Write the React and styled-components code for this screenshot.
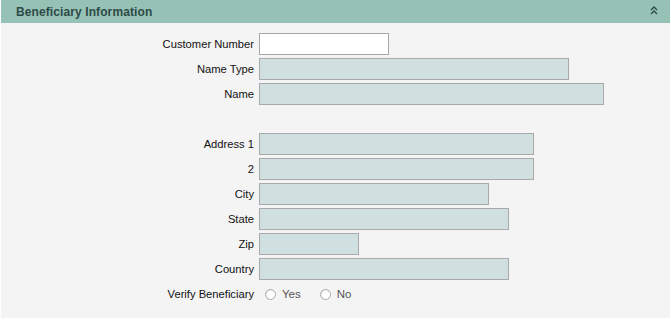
import React from "react";
import styled, { createGlobalStyle } from "styled-components";

const GlobalStyle = createGlobalStyle`
  body {
    margin: 0;
    background: #ffffff;
    font-family: "Liberation Sans", Arial, sans-serif;
  }
`;

const rows = [
  { label: "Customer Number", width: 130, editable: true },
  { label: "Name Type", width: 310 },
  { label: "Name", width: 345 },
  { spacer: true },
  { label: "Address 1", width: 275 },
  { label: "2", width: 275 },
  { label: "City", width: 230 },
  { label: "State", width: 250 },
  { label: "Zip", width: 100 },
  { label: "Country", width: 250 },
];

function CollapseIcon() {
  return (
    <svg width="8" height="9" viewBox="0 0 8 9">
      <path d="M1 4 L4 1 L7 4 M1 8 L4 5 L7 8" fill="none" stroke="#2c4c44" strokeWidth="1.4" />
    </svg>
  );
}

function App() {
  return (
    <>
      <GlobalStyle />
      <Panel>
        <Header>
          <Title>Beneficiary Information</Title>
          <CollapseIcon />
        </Header>
        <Form>
          {rows.map((r, i) =>
            r.spacer ? (
              <Spacer key={i} />
            ) : (
              <Row key={i}>
                <Label>{r.label}</Label>
                <Field $w={r.width} $editable={r.editable} />
              </Row>
            )
          )}
          <Row>
            <Label>Verify Beneficiary</Label>
            <Radios>
              <RadioOption>
                <RadioDot />
                Yes
              </RadioOption>
              <RadioOption>
                <RadioDot />
                No
              </RadioOption>
            </Radios>
          </Row>
        </Form>
      </Panel>
    </>
  );
}

export default App;

const Panel = styled.div`
  margin-left: 1px;
  width: 669px;
  height: 318px;
  background: #f4f4f4;
`;

const Header = styled.div`
  height: 23px;
  background: #96c2b6;
  display: flex;
  align-items: center;
  justify-content: space-between;
  padding: 0 12px 0 15px;
  svg {
    margin-top: -2px;
  }
`;

const Title = styled.div`
  font-weight: 700;
  font-size: 12px;
  letter-spacing: 0.1px;
  color: #2e4a47;
`;

const Form = styled.div`
  padding-top: 10px;
  display: flex;
  flex-direction: column;
  gap: 3px;
`;

const Row = styled.div`
  display: flex;
  align-items: center;
  gap: 5px;
  height: 22px;
`;

const Spacer = styled.div`
  height: 22px;
`;

const Label = styled.div`
  width: 253px;
  text-align: right;
  font-size: 11.2px;
  color: #111;
`;

const Field = styled.div`
  box-sizing: border-box;
  width: ${(p) => p.$w}px;
  height: 22px;
  border: 1px solid #a9a9a9;
  background: ${(p) => (p.$editable ? "#ffffff" : "#d0e0e0")};
`;

const Radios = styled.div`
  display: flex;
  gap: 19px;
  padding-left: 6px;
`;

const RadioOption = styled.div`
  display: flex;
  align-items: center;
  gap: 6px;
  font-size: 11.5px;
  color: #555;
`;

const RadioDot = styled.span`
  box-sizing: border-box;
  width: 11px;
  height: 11px;
  border-radius: 50%;
  border: 1px solid #a8a8a8;
  background: radial-gradient(circle at 60% 60%, #ffffff 40%, #e4e4e4 100%);
`;
